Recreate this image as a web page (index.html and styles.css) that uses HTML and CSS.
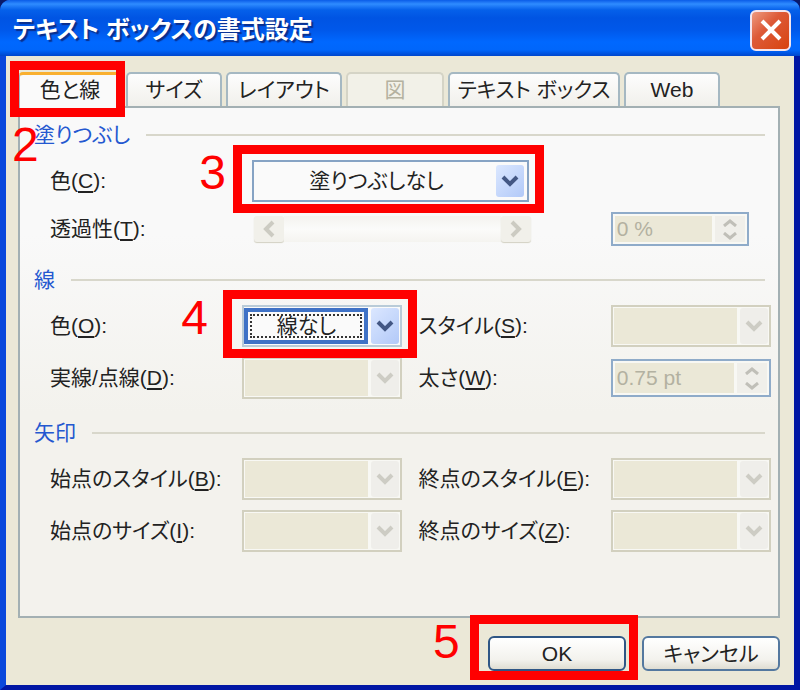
FILE: index.html
```html
<!DOCTYPE html>
<html lang="ja">
<head>
    <meta charset="utf-8">
    <meta name="viewport" content="width=device-width, initial-scale=1">
    <link rel="stylesheet" href="styles.css">
    <title>テキスト ボックスの書式設定</title>
</head>

<body>
<!-- shared arrow shapes -->
<svg class="defs" width="0" height="0">
    <symbol id="down" viewBox="0 0 18 12"><path d="M2 2l7 7 7-7" fill="none" stroke="currentColor" stroke-width="4"/></symbol>
    <symbol id="left" viewBox="0 0 14 18"><path d="M11 2L4 9l7 7" fill="none" stroke="currentColor" stroke-width="4"/></symbol>
    <symbol id="right" viewBox="0 0 14 18"><path d="M3 2l7 7-7 7" fill="none" stroke="currentColor" stroke-width="4"/></symbol>
    <symbol id="spinUp" viewBox="0 0 14 8"><path d="M1 7l6-5 6 5" fill="none" stroke="currentColor" stroke-width="3"/></symbol>
    <symbol id="spinDown" viewBox="0 0 14 8"><path d="M1 1l6 5 6-5" fill="none" stroke="currentColor" stroke-width="3"/></symbol>
</svg>

<div class="dialog">
    <header class="titlebar">
        <h1>テキスト ボックスの書式設定</h1>
        <button class="close" type="button" aria-label="閉じる">
            <svg width="24" height="24" viewBox="0 0 24 24"><path d="M3 3l18 18M21 3L3 21" stroke="#fff" stroke-width="4"/></svg>
        </button>
    </header>

    <form class="content">
        <nav class="tabs">
            <div class="mark">
                <button class="tab active" type="button">色と線</button>
                <span class="box"></span><span class="step below">2</span>
            </div>
            <button class="tab" type="button">サイズ</button>
            <button class="tab" type="button">レイアウト</button>
            <button class="tab" type="button" disabled>図</button>
            <button class="tab" type="button">テキスト ボックス</button>
            <button class="tab" type="button">Web</button>
        </nav>

        <div class="panel">
            <section>
                <h2>塗りつぶし</h2>
                <div class="rows">
                    <label for="fillColor">色(<u>C</u>):</label>
                    <div class="combo wide mark">
                        <select id="fillColor"><option>塗りつぶしなし</option></select>
                        <span class="arrow"><svg width="18" height="12"><use href="#down"/></svg></span>
                        <span class="box"></span><span class="step">3</span>
                    </div>
                    <label for="alpha">透過性(<u>T</u>):</label>
                    <div class="scroll">
                        <button type="button" disabled aria-label="減らす"><svg width="14" height="18"><use href="#left"/></svg></button>
                        <input id="alpha" type="range" value="0" disabled>
                        <button type="button" disabled aria-label="増やす"><svg width="14" height="18"><use href="#right"/></svg></button>
                    </div>
                    <div class="spin short">
                        <input type="text" value="0 %" aria-label="透過性" disabled>
                        <div class="spinButtons">
                            <button type="button" disabled aria-label="上"><svg width="14" height="8"><use href="#spinUp"/></svg></button>
                            <button type="button" disabled aria-label="下"><svg width="14" height="8"><use href="#spinDown"/></svg></button>
                        </div>
                    </div>
                </div>
            </section>

            <section>
                <h2>線</h2>
                <div class="rows">
                    <label for="lineColor">色(<u>O</u>):</label>
                    <div class="combo focused mark">
                        <select id="lineColor"><option>線なし</option></select>
                        <span class="arrow"><svg width="18" height="12"><use href="#down"/></svg></span>
                        <span class="box"></span><span class="step">4</span>
                    </div>
                    <label class="second" for="lineStyle">スタイル(<u>S</u>):</label>
                    <div class="combo off">
                        <select id="lineStyle" disabled></select>
                        <span class="arrow"><svg width="18" height="12"><use href="#down"/></svg></span>
                    </div>
                    <label for="dash">実線/点線(<u>D</u>):</label>
                    <div class="combo off">
                        <select id="dash" disabled></select>
                        <span class="arrow"><svg width="18" height="12"><use href="#down"/></svg></span>
                    </div>
                    <label class="second" for="weight">太さ(<u>W</u>):</label>
                    <div class="spin">
                        <input id="weight" type="text" value="0.75 pt" disabled>
                        <div class="spinButtons">
                            <button type="button" disabled aria-label="上"><svg width="14" height="8"><use href="#spinUp"/></svg></button>
                            <button type="button" disabled aria-label="下"><svg width="14" height="8"><use href="#spinDown"/></svg></button>
                        </div>
                    </div>
                </div>
            </section>

            <section>
                <h2>矢印</h2>
                <div class="rows">
                    <label for="beginStyle">始点のスタイル(<u>B</u>):</label>
                    <div class="combo off">
                        <select id="beginStyle" disabled></select>
                        <span class="arrow"><svg width="18" height="12"><use href="#down"/></svg></span>
                    </div>
                    <label class="second" for="endStyle">終点のスタイル(<u>E</u>):</label>
                    <div class="combo off">
                        <select id="endStyle" disabled></select>
                        <span class="arrow"><svg width="18" height="12"><use href="#down"/></svg></span>
                    </div>
                    <label for="beginSize">始点のサイズ(<u>I</u>):</label>
                    <div class="combo off">
                        <select id="beginSize" disabled></select>
                        <span class="arrow"><svg width="18" height="12"><use href="#down"/></svg></span>
                    </div>
                    <label class="second" for="endSize">終点のサイズ(<u>Z</u>):</label>
                    <div class="combo off">
                        <select id="endSize" disabled></select>
                        <span class="arrow"><svg width="18" height="12"><use href="#down"/></svg></span>
                    </div>
                </div>
            </section>
        </div>

        <footer class="actions">
            <div class="mark">
                <button class="btn default" type="button">OK</button>
                <span class="box"></span><span class="step">5</span>
            </div>
            <button class="btn" type="button">キャンセル</button>
        </footer>
    </form>
</div>
</body>
</html>
```
FILE: styles.css
```css
* {
    box-sizing: border-box;
}
body {
    margin: 0;
    background: #0a1a6a;
}
body, button, input, select {
    font-family: "Liberation Sans", "Noto Sans CJK JP", sans-serif;
    font-size: 21px;
    line-height: 26px;
    font-feature-settings: "palt";
    color: #222;
}
button, input, select {
    margin: 0;
    padding: 0;
    border: 0;
    border-radius: 0;
}
.defs {
    position: absolute;
}

/* window */
.dialog {
    display: flex;
    flex-direction: column;
    min-height: 100vh;
    border: solid #0a48dc;
    border-width: 0 6px 5px;
    border-right-color: #0016a4;
    border-bottom-color: #0016a4;
    border-radius: 10px 10px 0 0;
    background: #ebe8d7;
}
.titlebar {
    display: flex;
    align-items: center;
    justify-content: space-between;
    height: 56px;
    margin: 0 -6px;
    padding: 4px 9px 0 13px;
    border-radius: 10px 10px 0 0;
    background: linear-gradient(#0a5ce8 0, #2f8cff 4px, #0560ea 10px, #0054e3 18px, #0058ea 30px, #0068ff 42px, #0066fb 50px, #0046cc 56px);
}
.titlebar h1 {
    margin: 0;
    font-size: 24px;
    color: #fff;
    text-shadow: 2px 2px 1px #0a2f8c;
}
.close {
    display: flex;
    align-items: center;
    justify-content: center;
    width: 41px;
    height: 41px;
    border: 2px solid #f4e6ee;
    border-radius: 6px;
    background: linear-gradient(135deg, #ee9b80, #dd5a38 40%, #d8430f);
}
.content {
    flex: 1;
    display: flex;
    flex-direction: column;
    padding: 16px 14px 14px 12px;
}

/* tabs */
.tabs {
    display: grid;
    grid-template-columns: 104px 96px 116px 98px 172px 96px;
    gap: 4px;
    height: 34px;
}
.tab {
    width: 100%;
    height: 34px;
    border: 2px solid #a5b8c2;
    border-bottom: 0;
    border-radius: 5px 5px 0 0;
    background: linear-gradient(#fdfdfd, #f1f0eb);
    white-space: nowrap;
}
.tab.active {
    height: 36px;
    padding-bottom: 4px;
    border-top: 3px solid #f9b030;
    background: #fafafa;
}
.tab:disabled {
    border-color: #d5d4c6;
    background: #f2f1e8;
    color: #b5b2a0;
}

/* panel */
.panel {
    flex: 1;
    padding: 14px 7px 20px 14px;
    border: 2px solid #a3b0b3;
    background: linear-gradient(#f9f9f9 25%, #f3f2ed 60%);
}
section {
    margin-bottom: 21px;
}
h2 {
    display: flex;
    align-items: center;
    gap: 16px;
    margin: 0 6px 12px 0;
    font-size: 21px;
    font-weight: normal;
    color: #2458d0;
}
h2:after {
    content: "";
    flex: 1;
    height: 2px;
    background: #d8d7cb;
}
.rows {
    display: grid;
    grid-template-columns: minmax(0, 12fr) minmax(0, 10fr) minmax(0, 1fr) minmax(0, 12fr) minmax(0, 10fr);
    row-gap: 10px;
    align-items: center;
    padding-left: 16px;
}
label {
    grid-column: 1;
    white-space: nowrap;
}
label.second {
    grid-column: 4;
}
u {
    text-underline-offset: 3px;
}

/* drop-downs */
.combo {
    display: flex;
    height: 42px;
    padding: 3px;
    border: 2px solid #86a3c4;
    background: #fafafa;
}
.combo.wide {
    grid-column: 2 / 5;
    width: 75%;
    margin-left: 10px;
}
.combo select {
    appearance: none;
    flex: 1;
    min-width: 0;
    background: none;
    text-align-last: center;
}
.arrow {
    display: flex;
    align-items: center;
    justify-content: center;
    width: 28px;
    border-radius: 3px;
    background: linear-gradient(135deg, #dbe7ff, #b2c9f8);
    color: #435784;
    pointer-events: none;
}
.combo.focused {
    border-color: #b9cbd8;
    padding: 1px 1px 1px 0;
}
.combo.focused select {
    margin-right: 3px;
    border: 4px solid #3f72c6;
    outline: 2px dotted #333;
    outline-offset: -8px;
}
.combo.off {
    border-color: #d2d0bf;
    padding: 1px;
    background: #f8f8f4;
}
.combo.off select {
    opacity: 1;
    margin-right: 3px;
    background: #ebe8d7;
}
.combo.off .arrow {
    background: #efeeea;
    color: #cdccc4;
}

/* scroll bar and spinners */
.scroll {
    grid-column: 2 / 5;
    display: flex;
    width: 75%;
    height: 26px;
    margin-left: 12px;
}
.scroll button {
    display: flex;
    align-items: center;
    justify-content: center;
    width: 30px;
    border-radius: 3px;
    background: #f1f0ea;
    box-shadow: 0 1px 1px #d2d0c2;
    color: #cccbc2;
}
.scroll input {
    appearance: none;
    flex: 1;
    min-width: 0;
    background: linear-gradient(#f4f3ef, #fbfbfa 50%, #f5f4f0);
}
.scroll input::-webkit-slider-thumb {
    appearance: none;
}
.spin {
    display: flex;
    height: 38px;
    padding: 2px;
    border: 2px solid #8fabc9;
    background: #f8f8f4;
}
.spin.short {
    grid-column: 5;
    width: 138px;
    height: 34px;
}
.spin input {
    flex: 1;
    min-width: 0;
    padding-left: 2px;
    background: #ebe8d7;
    color: #b3b1a1;
}
.spinButtons {
    display: flex;
    flex-direction: column;
    width: 30px;
    margin-left: 3px;
}
.spinButtons button {
    flex: 1;
    display: flex;
    align-items: center;
    justify-content: center;
    background: #f0efea;
    color: #c0bfb8;
}

/* buttons */
.actions {
    display: flex;
    justify-content: flex-end;
    gap: 16px;
    padding-top: 18px;
}
.btn {
    display: block;
    width: 138px;
    height: 35px;
    border: 2px solid #54789f;
    border-radius: 6px;
    background: linear-gradient(#fff, #f3f2ed 70%, #dfddd2);
}
.btn.default {
    border-color: #2f5685;
}

/* numbered red marks */
.mark {
    position: relative;
}
.box {
    position: absolute;
    inset: -17px -17px -13px -21px;
    border: 9px solid #f00;
    pointer-events: none;
}
.step {
    position: absolute;
    top: -14px;
    left: -55px;
    font-family: "Liberation Sans Narrow", "Liberation Sans", sans-serif;
    font-size: 48px;
    line-height: 50px;
    color: #f00;
    pointer-events: none;
}
.focused .step {
    left: -63px;
}
.tabs .box {
    inset: -11px -3px -9px -8px;
}
.tabs .below {
    top: 48px;
    left: -6px;
}
.actions .box {
    inset: -21px -12px -9px -18px;
}
.actions .step {
    top: -19px;
}
```
